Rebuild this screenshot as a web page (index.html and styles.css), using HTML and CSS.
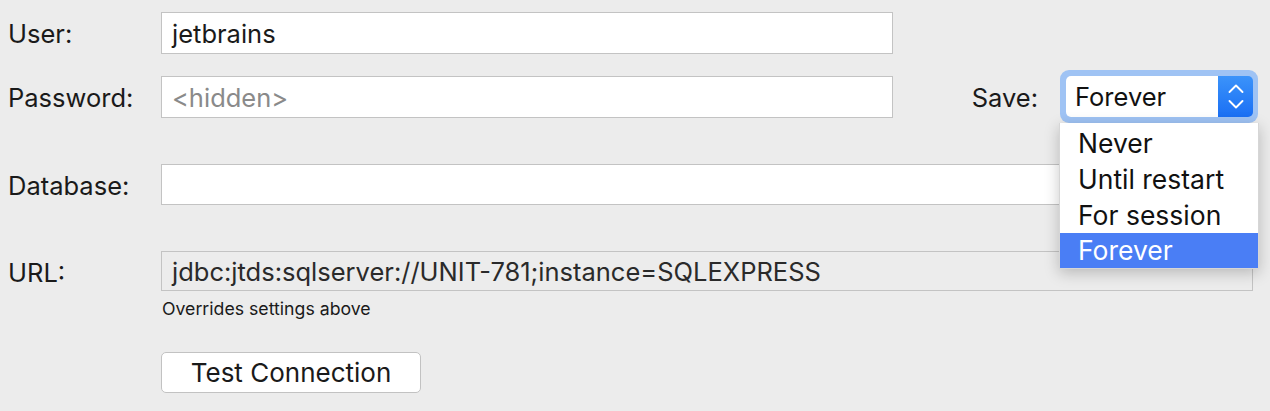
FILE: index.html
```html
<!DOCTYPE html>
<html>
<head>
<meta charset="utf-8">
<link rel="stylesheet" href="styles.css">
</head>
<body>
<div class="form">
  <div class="row row-user">
    <label class="lbl">User:</label>
    <div class="field-col">
      <div class="input short">jetbrains</div>
    </div>
  </div>
  <div class="row row-pass">
    <label class="lbl">Password:</label>
    <div class="field-col pass-col">
      <div class="input short placeholder">&lt;hidden&gt;</div>
      <span class="save-lbl">Save:</span>
      <div class="select-wrap">
        <div class="select">
          <span class="select-val">Forever</span>
          <span class="select-btn">
            <svg width="18" height="27" viewBox="0 0 18 27"><path d="M2.5 9 L9 2.5 L15.5 9 M2.5 18 L9 24.5 L15.5 18" fill="none" stroke="#fff" stroke-width="1.9" stroke-linecap="round" stroke-linejoin="round"/></svg>
          </span>
        </div>
        <ul class="menu">
          <li>Never</li>
          <li>Until restart</li>
          <li>For session</li>
          <li class="sel">Forever</li>
        </ul>
      </div>
    </div>
  </div>
  <div class="row row-db">
    <label class="lbl">Database:</label>
    <div class="field-col">
      <div class="input wide"></div>
    </div>
  </div>
  <div class="row row-url">
    <label class="lbl">URL:</label>
    <div class="field-col">
      <div class="input wide disabled">jdbc:jtds:sqlserver://UNIT-781;instance=SQLEXPRESS</div>
      <div class="hint">Overrides settings above</div>
      <button class="btn">Test Connection</button>
    </div>
  </div>
</div>
</body>
</html>
```
FILE: styles.css
```css
html, body {
  margin: 0;
  padding: 0;
  background: #ececec;
}
body {
  font-family: Inter, "Noto Sans", sans-serif;
  font-size: 25.5px;
  color: #1a1a1a;
  width: 1270px;
  height: 411px;
  overflow: hidden;
}
.form {
  padding: 12px 0 0 8px;
}
.row {
  display: grid;
  grid-template-columns: 153px 1fr;
  align-items: start;
}
.lbl {
  display: flex;
  align-items: center;
  height: 42px;
}
.field-col {
  display: flex;
  flex-direction: column;
  align-items: flex-start;
}
.input {
  box-sizing: border-box;
  height: 42px;
  border: 1px solid #c3c3c3;
  background: #fff;
  padding: 0 10px;
  display: flex;
  align-items: center;
  white-space: nowrap;
}
.short { width: 732px; }
.wide { width: 1092px; height: 41px; }
.placeholder { color: #8a8a8a; }
.disabled { background: #ececec; color: #2a2a2a; height: 40px; }
.row-pass { margin-top: 22px; }
.row-db { margin-top: 46px; }
.row-url { margin-top: 45px; }
.pass-col {
  flex-direction: row;
  align-items: center;
  width: 1092px;
}
.save-lbl {
  margin-left: auto;
  margin-right: 22px;
}
.select-wrap {
  position: relative;
  margin: -6px -5px -5px 0;
}
.select {
  box-sizing: border-box;
  width: 198px;
  height: 53px;
  border-radius: 9px;
  background: #9fc3f4;
  padding: 6px 5px 6px 6px;
  display: flex;
}
.select-val {
  flex: 1;
  background: #fff;
  border-radius: 5px 0 0 5px;
  display: flex;
  align-items: center;
  padding-left: 9px;
  color: #111;
}
.select-btn {
  width: 35px;
  background: linear-gradient(#3b93fa, #1a6ff4);
  border-radius: 0 5px 5px 0;
  display: flex;
  align-items: center;
  justify-content: center;
}
.menu {
  position: absolute;
  left: -1px;
  top: 53px;
  width: 200px;
  margin: 0;
  padding: 2px 0 0;
  list-style: none;
  background: #fff;
  border: 1px solid #d6d6d6;
  border-top: none;
  box-sizing: border-box;
  box-shadow: 0 4px 14px rgba(0,0,0,0.22);
  z-index: 5;
  font-size: 26.5px;
}
.menu li {
  height: 36px;
  line-height: 36px;
  padding-left: 18px;
  color: #111;
  white-space: nowrap;
}
.menu li.sel {
  background: #4a7ef5;
  color: #fff;
  height: 35px;
  line-height: 35px;
}
.hint {
  font-size: 17.7px;
  margin-top: 7px;
  margin-left: 1px;
  color: #1a1a1a;
}
.btn {
  margin-top: 33px;
  box-sizing: border-box;
  width: 260px;
  height: 41px;
  font: inherit;
  font-size: 26px;
  color: #1a1a1a;
  background: #fff;
  border: 1px solid #c2c2c2;
  border-radius: 5px;
  padding: 0;
}
```
